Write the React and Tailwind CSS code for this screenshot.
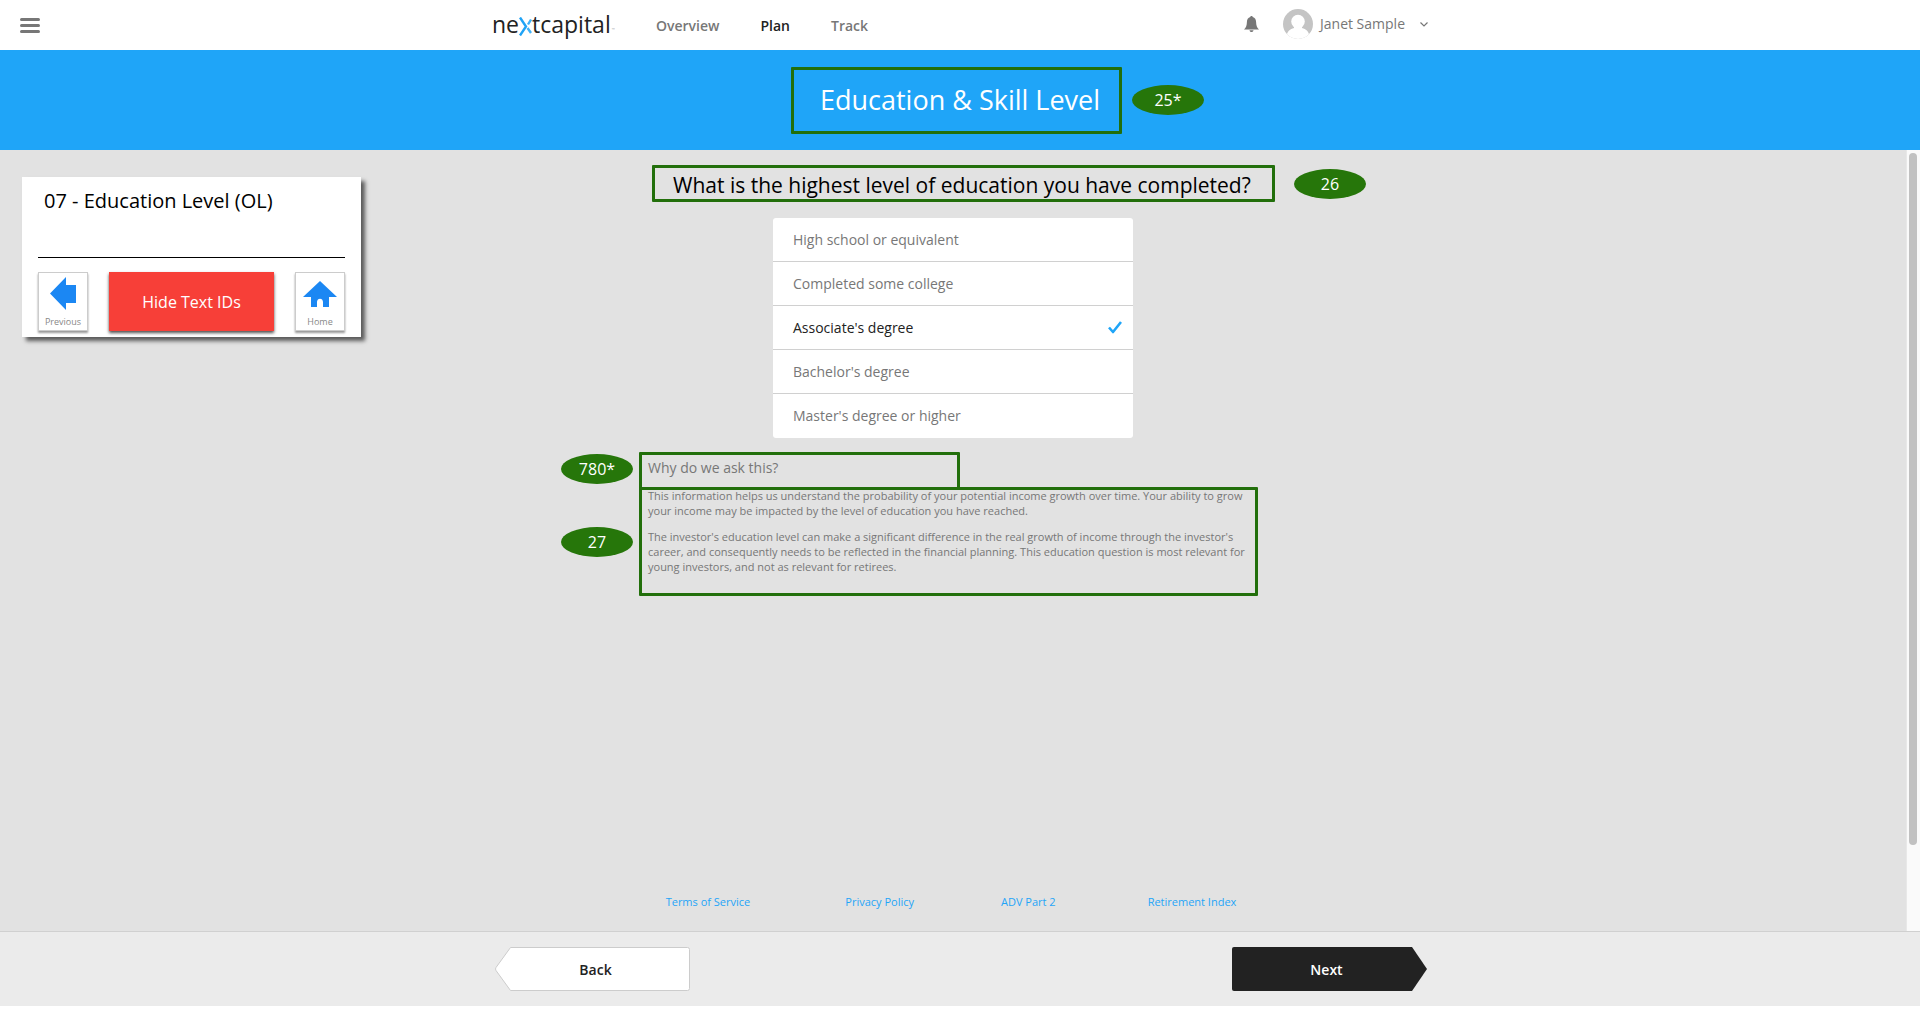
import { useState } from "react";

const EDUCATION_LEVELS = [
  "High school or equivalent",
  "Completed some college",
  "Associate's degree",
  "Bachelor's degree",
  "Master's degree or higher",
];

function TextId({ children }) {
  return (
    <span className="flex h-[30px] w-[72px] shrink-0 items-center justify-center rounded-[50%] bg-[#26760a] text-base text-white">
      {children}
    </span>
  );
}

function Logo() {
  return (
    <a href="#home" aria-label="nextcapital" className="flex h-[30px] w-[124px] items-center pb-[2px] text-[23px] leading-[30px] text-[#222]">
      <span>ne</span>
      <svg className="mt-[5px] h-[19px] w-[13px] shrink-0" viewBox="0 0 13 19" fill="none" strokeWidth="2.400" aria-hidden="true">
        <path d="M1 .5 L7 9.500 L1 18.500" stroke="#1fa3f6" />
        <path d="M12 2.500 L9 7.500 M8.500 11 L12 16" stroke="#3fb1f8" />
      </svg>
      <span>tcapital</span>
      <span className="mt-3 ml-px text-[4px] leading-none text-[#aaa]">™</span>
    </a>
  );
}

function Header() {
  return (
    <header className="grid h-[50px] shrink-0 grid-cols-[1fr_936px_1fr] items-center bg-white">
      <button type="button" aria-label="Menu" className="ml-5 flex w-5 flex-col gap-[3px]">
        <span className="h-[3px] w-5 rounded-full bg-[#777]" />
        <span className="h-[3px] w-5 rounded-full bg-[#777]" />
        <span className="h-[3px] w-5 rounded-full bg-[#777]" />
      </button>
      <div className="flex items-center">
        <Logo />
        <nav className="ml-10 flex gap-[41px] pt-[2px] text-sm font-semibold text-[#777]">
          <a href="#overview">Overview</a>
          <a href="#plan" className="text-[#222]">Plan</a>
          <a href="#track">Track</a>
        </nav>
        <div className="ml-auto flex items-center pb-[2px] text-sm text-[#777]">
          <button type="button" aria-label="Notifications">
            <svg className="h-4 w-[15px]" viewBox="0 0 15 16" fill="#777" aria-hidden="true">
              <path d="M7.500 0 C8.300 0 8.700 .5 8.700 1 C11 1.500 12 3.500 12.100 6 C12.200 9.500 12.800 11.500 15 13.600 H0 C2.200 11.500 2.800 9.500 2.900 6 C3 3.500 4 1.500 6.300 1 C6.300 .5 6.700 0 7.500 0 Z M5.500 14.200 H9.500 C9.400 15.300 8.500 16 7.500 16 C6.500 16 5.600 15.300 5.500 14.200 Z" />
            </svg>
          </button>
          <button type="button" className="ml-6 flex items-center">
            <svg className="h-[30px] w-[30px]" viewBox="0 0 30 30" aria-hidden="true">
              <clipPath id="avatar"><circle cx="15" cy="15" r="15" /></clipPath>
              <g clipPath="url(#avatar)">
                <rect width="30" height="30" fill="#c4c4c4" />
                <circle cx="15" cy="12.500" r="6.800" fill="#fff" />
                <path d="M11 16 H19 V19 C23 20 25.500 22 26.500 27 V30 H3.500 V27 C4.500 22 7 20 11 19 Z" fill="#fff" />
              </g>
            </svg>
            <span className="ml-[7px]">Janet Sample</span>
            <svg className="ml-[15px] h-[5px] w-2" viewBox="0 0 8 5" fill="none" stroke="#777" strokeWidth="1.200" aria-hidden="true">
              <path d="M.5 .5 L4 4 L7.500 .5" />
            </svg>
          </button>
        </div>
      </div>
    </header>
  );
}

function PrototypePanel({ showIds, onToggle }) {
  return (
    <aside className="mt-[27px] w-[339px] bg-white px-4 pt-2 pb-[6px] shadow-[4px_4px_4px_rgba(0,0,0,0.6)]">
      <h2 className="h-[73px] border-b border-black px-[6px] text-xl leading-8 text-black">07 - Education Level (OL)</h2>
      <div className="mt-[14px] flex justify-between">
        <button type="button" className="flex h-[59px] w-[50px] flex-col items-center justify-between border border-[#ccc] bg-white pt-1 shadow-[0_2px_2px_rgba(0,0,0,0.4)]">
          <svg className="h-[33px] w-[26px]" viewBox="0 0 26 33" fill="#1b87f3" aria-hidden="true">
            <path d="M0 16.500 L16 0 V8 H26 V26 H16 V33 Z" />
          </svg>
          <span className="text-[9px] leading-4 text-[#888]">Previous</span>
        </button>
        <button type="button" onClick={onToggle} className="h-[59px] w-[165px] bg-[#f73f38] text-base text-white shadow-[0_2px_3px_rgba(0,0,0,0.7)]">
          {showIds ? "Hide Text IDs" : "Show Text IDs"}
        </button>
        <button type="button" className="flex h-[59px] w-[50px] flex-col items-center justify-between border border-[#ccc] bg-white pt-2 shadow-[0_2px_2px_rgba(0,0,0,0.4)]">
          <svg className="h-[26px] w-[34px]" viewBox="0 0 34 26" fill="#1b87f3" aria-hidden="true">
            <path d="M17 0 L34 16 H26 V26 H20 V21 C20 16.500 14 16.500 14 21 V26 H8 V16 H0 Z" />
          </svg>
          <span className="text-[9px] leading-4 text-[#888]">Home</span>
        </button>
      </div>
    </aside>
  );
}

function EducationOptions() {
  const [selected, setSelected] = useState("Associate's degree");
  return (
    <fieldset aria-labelledby="question" className="ml-[212px] mt-4 w-[360px] overflow-hidden rounded-[3px] bg-white">
      {EDUCATION_LEVELS.map((level) => (
        <label
          key={level}
          className="flex h-11 cursor-pointer items-center justify-between border-b border-[#d0d0d0] pr-[11px] pl-5 text-sm text-[#777] last:border-b-0 has-checked:text-[#222]"
        >
          <input
            type="radio"
            name="education"
            className="sr-only"
            checked={selected === level}
            onChange={() => setSelected(level)}
          />
          {level}
          {selected === level && (
            <svg className="h-[13px] w-[14px]" viewBox="0 0 14 13" fill="none" stroke="#1fa5f8" strokeWidth="2.600" strokeLinejoin="round" aria-hidden="true">
              <path d="M1 6.500 L5 11 L13 1" />
            </svg>
          )}
        </label>
      ))}
    </fieldset>
  );
}

function Explanation() {
  return (
    <section className="mt-[14px] grid grid-cols-[72px_619px] gap-x-[6px] text-[#777]">
      <div className="pt-[2px]"><TextId>780*</TextId></div>
      <h3 className="h-[38px] w-[321px] rounded-[1px] border-3 border-[#226f0b] px-[6px] text-sm leading-[26px]">
        Why do we ask this?
      </h3>
      <div className="pt-[37px]"><TextId>27</TextId></div>
      <div className="-mt-[3px] h-[109px] rounded-[1px] border-3 border-[#226f0b] px-[6px] text-[11px] leading-[15px]">
        <p className="-mt-[2px]">
          This information helps us understand the probability of your potential income growth over time. Your ability to grow your income may be impacted by the level of education you have reached.
        </p>
        <p className="mt-[11px]">
          The investor's education level can make a significant difference in the real growth of income through the investor's career, and consequently needs to be reflected in the financial planning. This education question is most relevant for young investors, and not as relevant for retirees.
        </p>
      </div>
    </section>
  );
}

function Footer() {
  return (
    <footer className="flex h-[75px] shrink-0 justify-center border-t border-[#d0d0d0] bg-[#ebebeb] pt-[15px] pl-[2px]">
      <div className="flex w-[932px] justify-between text-sm font-semibold">
        <button type="button" className="relative h-11 w-[195px] pt-[2px] pl-[6px] text-[#222]">
          <svg className="absolute inset-0 h-11 w-[195px]" viewBox="0 0 195 44" aria-hidden="true">
            <path d="M15.500 .5 H192.500 Q194.500 .5 194.500 2.500 V41.500 Q194.500 43.500 192.500 43.500 H15.500 L1 23.500 Q0 22 1 20.500 Z" fill="#fff" stroke="#ccc" />
          </svg>
          <span className="relative">Back</span>
        </button>
        <button type="button" className="relative h-11 w-[195px] pt-[2px] pr-[6px] text-white">
          <svg className="absolute inset-0 h-11 w-[195px]" viewBox="0 0 195 44" aria-hidden="true">
            <path d="M2 0 H180 L195 22 L180 44 H2 Q0 44 0 42 V2 Q0 0 2 0 Z" fill="#222" />
          </svg>
          <span className="relative">Next</span>
        </button>
      </div>
    </footer>
  );
}

export default function App() {
  const [showIds, setShowIds] = useState(true);
  return (
    <div className="h-screen bg-white pr-1 pb-1">
      <div className="flex h-full flex-col bg-[#e2e2e2] font-['Open_Sans','Noto_Sans',sans-serif]">
        <Header />
        <div className="flex h-[100px] shrink-0 items-center justify-center gap-[10px] bg-[#1fa5f8] pl-[75px]">
          <h1 className="flex h-[67px] w-[331px] items-center justify-center rounded-[1px] border-3 border-[#226f0b] pl-[7px] text-[27px] text-white">
            Education &amp; Skill Level
          </h1>
          <TextId>25*</TextId>
        </div>
        <div className="flex min-h-0 grow">
          <div className="flex min-w-0 grow flex-col">
            <div className="grid grid-cols-[1fr_806px_1fr] items-start pl-[22px]">
              <PrototypePanel showIds={showIds} onToggle={() => setShowIds(!showIds)} />
              <main className="pt-[15px]">
                <div className="flex items-center gap-[19px] pl-[91px]">
                  <h2 id="question" className="h-[37px] w-[623px] rounded-[1px] border-3 border-[#226f0b] pl-[18px] text-[21px] leading-[34px] text-black">
                    What is the highest level of education you have completed?
                  </h2>
                  <TextId>26</TextId>
                </div>
                <EducationOptions />
                <Explanation />
              </main>
              <div />
            </div>
            <nav className="mt-auto mb-[21px] flex justify-center pr-1 text-[11px] leading-4 text-[#1fa5f8]">
              <a href="#terms">Terms of Service</a>
              <a href="#privacy" className="ml-[95px]">Privacy Policy</a>
              <a href="#adv" className="ml-[87px]">ADV Part 2</a>
              <a href="#index" className="ml-[92px]">Retirement Index</a>
            </nav>
          </div>
          <div className="w-[14px] shrink-0 border-l border-[#e8e8e8] bg-[#fafafa] px-[2px] pt-[3px]" aria-hidden="true">
            <div className="h-[89%] w-2 rounded-full bg-[#c1c1c1]" />
          </div>
        </div>
        <Footer />
      </div>
    </div>
  );
}
